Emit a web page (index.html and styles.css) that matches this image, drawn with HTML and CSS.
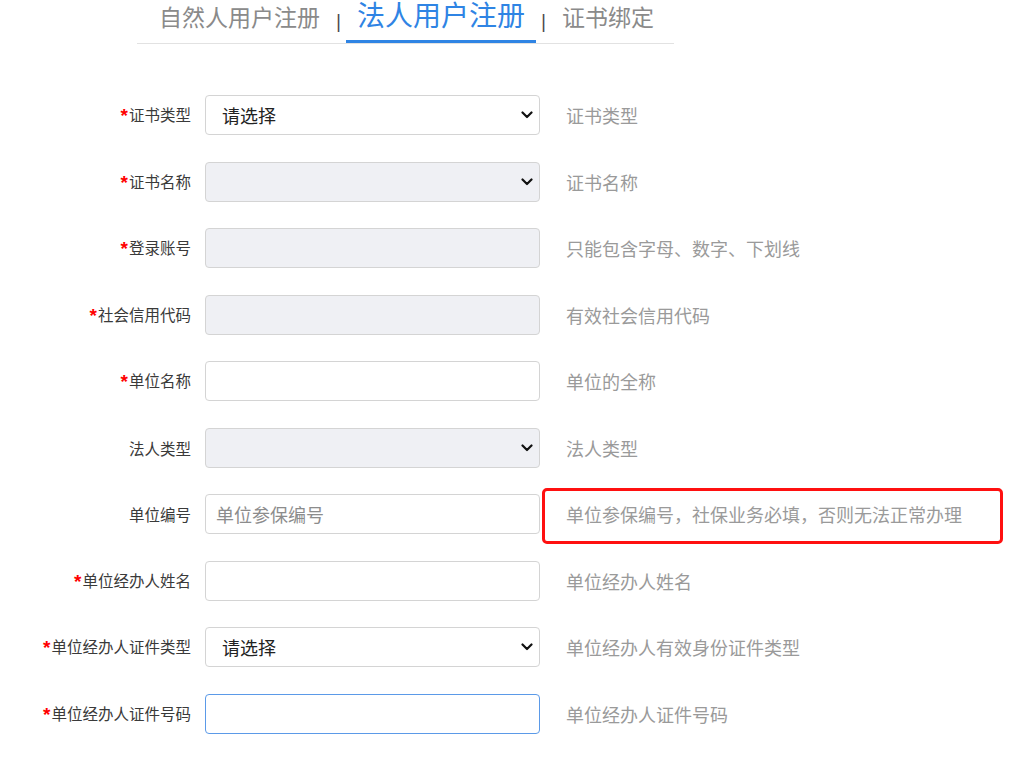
FILE: index.html
```html
<!DOCTYPE html>
<html lang="zh-CN">
<head>
<meta charset="utf-8">
<title>法人用户注册</title>
<link rel="stylesheet" href="styles.css">
</head>
<body>
<div class="page">
  <nav class="tabs">
    <a class="tab">自然人用户注册</a>
    <span class="sep">|</span>
    <a class="tab active">法人用户注册</a>
    <span class="sep">|</span>
    <a class="tab">证书绑定</a>
  </nav>

  <form class="form">
    <div class="row">
      <label class="label"><span class="req">*</span>证书类型</label>
      <div class="field select"><span class="val">请选择</span><svg class="chev" viewBox="0 0 12 8"><path d="M1.5 1.5 6 6l4.5-4.5"/></svg></div>
      <span class="hint">证书类型</span>
    </div>
    <div class="row">
      <label class="label"><span class="req">*</span>证书名称</label>
      <div class="field select disabled"><span class="val"></span><svg class="chev" viewBox="0 0 12 8"><path d="M1.5 1.5 6 6l4.5-4.5"/></svg></div>
      <span class="hint">证书名称</span>
    </div>
    <div class="row">
      <label class="label"><span class="req">*</span>登录账号</label>
      <div class="field disabled"></div>
      <span class="hint">只能包含字母、数字、下划线</span>
    </div>
    <div class="row">
      <label class="label"><span class="req">*</span>社会信用代码</label>
      <div class="field disabled"></div>
      <span class="hint">有效社会信用代码</span>
    </div>
    <div class="row">
      <label class="label"><span class="req">*</span>单位名称</label>
      <div class="field"></div>
      <span class="hint">单位的全称</span>
    </div>
    <div class="row">
      <label class="label">法人类型</label>
      <div class="field select disabled"><span class="val"></span><svg class="chev" viewBox="0 0 12 8"><path d="M1.5 1.5 6 6l4.5-4.5"/></svg></div>
      <span class="hint">法人类型</span>
    </div>
    <div class="row">
      <label class="label">单位编号</label>
      <div class="field input"><span class="ph">单位参保编号</span></div>
      <span class="hint marked">单位参保编号，社保业务必填，否则无法正常办理</span>
    </div>
    <div class="row">
      <label class="label"><span class="req">*</span>单位经办人姓名</label>
      <div class="field"></div>
      <span class="hint">单位经办人姓名</span>
    </div>
    <div class="row">
      <label class="label"><span class="req">*</span>单位经办人证件类型</label>
      <div class="field select"><span class="val">请选择</span><svg class="chev" viewBox="0 0 12 8"><path d="M1.5 1.5 6 6l4.5-4.5"/></svg></div>
      <span class="hint">单位经办人有效身份证件类型</span>
    </div>
    <div class="row">
      <label class="label"><span class="req">*</span>单位经办人证件号码</label>
      <div class="field focus"></div>
      <span class="hint">单位经办人证件号码</span>
    </div>
  </form>
</div>
</body>
</html>
```

FILE: styles.css
```css
* { box-sizing: border-box; }

html, body {
  margin: 0;
  padding: 0;
  background: #fff;
}

body {
  font-family: "Noto Sans CJK SC", "Noto Sans", sans-serif;
  color: #333;
}

.page {
  width: 1031px;
}

/* tabs */
.tabs {
  display: flex;
  align-items: flex-end;
  margin-left: 137px;
  width: 537px;
  padding-left: 11px;
  border-bottom: 1px solid #e2e2e2;
  height: 44px;
}

.tab {
  display: block;
  font-size: 23px;
  line-height: 1;
  color: #8a8a8a;
  padding: 0 11px 12px;
  border-bottom: 3px solid transparent;
  white-space: nowrap;
}

.tab.active {
  font-size: 28px;
  color: #2f84e4;
  border-bottom-color: #2f84e4;
  padding-bottom: 12px;
}

.sep {
  display: block;
  width: 15px;
  text-align: center;
  font-family: "DejaVu Sans", sans-serif;
  font-size: 18px;
  line-height: 1;
  color: #4a4a4a;
  padding-bottom: 12px;
}

/* form */
.form {
  margin: 51px 0 0;
  display: flex;
  flex-direction: column;
  gap: 26.5px;
}

.row {
  display: flex;
  align-items: center;
  height: 40px;
}

.label {
  flex: 0 0 191px;
  text-align: right;
  font-size: 15.5px;
  line-height: 20px;
  color: #3a3a3a;
  white-space: nowrap;
}

.req {
  color: #ff0000;
  font-family: "Liberation Sans", sans-serif;
  font-size: 19px;
  font-weight: bold;
  vertical-align: -1px;
  margin-right: 1px;
}

.field {
  position: relative;
  flex: 0 0 335px;
  height: 40px;
  margin-left: 14px;
  border: 1px solid #d4d4d4;
  border-radius: 4px;
  background: #fff;
  display: flex;
  align-items: center;
  font-size: 18px;
  color: #222;
}

.field.disabled {
  background: #eff0f4;
}

.field.focus {
  border-color: #5b9ae8;
}

.select .val {
  padding-left: 16px;
}

.input .ph {
  padding-left: 10px;
  color: #8c8c8c;
}

.chev {
  position: absolute;
  right: 6px;
  top: 15px;
  width: 12px;
  height: 8px;
  fill: none;
  stroke: #111;
  stroke-width: 2.2;
  stroke-linecap: round;
  stroke-linejoin: round;
}

.hint {
  margin-left: 26px;
  font-size: 18px;
  line-height: 24px;
  color: #9a9a9a;
  white-space: nowrap;
}

.hint.marked {
  position: relative;
}

.hint.marked::after {
  content: "";
  position: absolute;
  left: -24px;
  top: -14px;
  width: 455px;
  height: 50px;
  border: 3px solid #ff1010;
  border-radius: 5px;
}
```
